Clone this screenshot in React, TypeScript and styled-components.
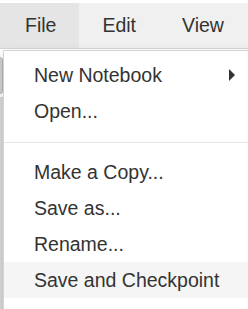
import React from "react";
import styled, { createGlobalStyle } from "styled-components";

const Global = createGlobalStyle`
  html, body { margin: 0; padding: 0; background: #ffffff; }
  body { font-family: "Liberation Sans", Arial, sans-serif; color: #333333; overflow: hidden; }
  #root { width: 248px; height: 309px; }
`;

const Page = styled.div`
  position: relative;
  width: 248px;
  height: 309px;
  padding-top: 3px;
  box-sizing: border-box;
  overflow: hidden;
`;

const MenuBar = styled.nav`
  display: flex;
  height: 46px;
  box-sizing: border-box;
  background: #f0f0f0;
  border-bottom: 1px solid #d6d6d6;
`;

const MenuItem = styled.div<{ $open?: boolean }>`
  font-size: 19.5px;
  line-height: 28px;
  padding: 8px 23px 9px 23px;
  background: ${(p) => (p.$open ? "#e5e5e5" : "transparent")};
  color: #333333;
  &:first-child { padding-left: 25px; }
`;

const Toolbar = styled.div`
  display: flex;
  padding-top: 8px;
`;

const ToolButton = styled.div`
  width: 34px;
  height: 37px;
  margin-left: -31px;
  box-sizing: border-box;
  background: #d4d4d4;
  border: 1px solid #b8b8b8;
  border-radius: 3px;
`;

const NotebookEdge = styled.div`
  margin-top: 3px;
  width: 3px;
  height: 220px;
  background: #dcdcdc;
`;

const Dropdown = styled.ul`
  position: absolute;
  top: 50px;
  left: 3px;
  width: 262px;
  margin: 0;
  padding: 6px 0 24px;
  list-style: none;
  background: #ffffff;
  border: 1px solid rgba(0, 0, 0, 0.17);
  box-shadow: 0 6px 12px rgba(0, 0, 0, 0.18);
  box-sizing: border-box;
`;

const Item = styled.li<{ $active?: boolean }>`
  display: flex;
  align-items: center;
  justify-content: space-between;
  height: 36px;
  box-sizing: border-box;
  padding: 4px 29px 4px 30px;
  font-size: 19.5px;
  line-height: 28px;
  color: #333333;
  white-space: nowrap;
  background: ${(p) => (p.$active ? "#f5f5f5" : "transparent")};
`;

const Caret = styled.span`
  width: 0;
  height: 0;
  border-style: solid;
  border-width: 6px 0 6px 6px;
  border-color: transparent transparent transparent #333333;
`;

const Divider = styled.li`
  height: 1px;
  margin: 13px 0 11px;
  background: #e5e5e5;
`;

export default function App() {
  return (
    <>
      <Global />
      <Page>
        <MenuBar>
          <MenuItem $open>File</MenuItem>
          <MenuItem>Edit</MenuItem>
          <MenuItem>View</MenuItem>
        </MenuBar>
        <Toolbar>
          <ToolButton />
        </Toolbar>
        <NotebookEdge />
        <Dropdown>
          <Item>
            New Notebook
            <Caret />
          </Item>
          <Item>Open...</Item>
          <Divider />
          <Item>Make a Copy...</Item>
          <Item>Save as...</Item>
          <Item>Rename...</Item>
          <Item $active>Save and Checkpoint</Item>
        </Dropdown>
      </Page>
    </>
  );
}
